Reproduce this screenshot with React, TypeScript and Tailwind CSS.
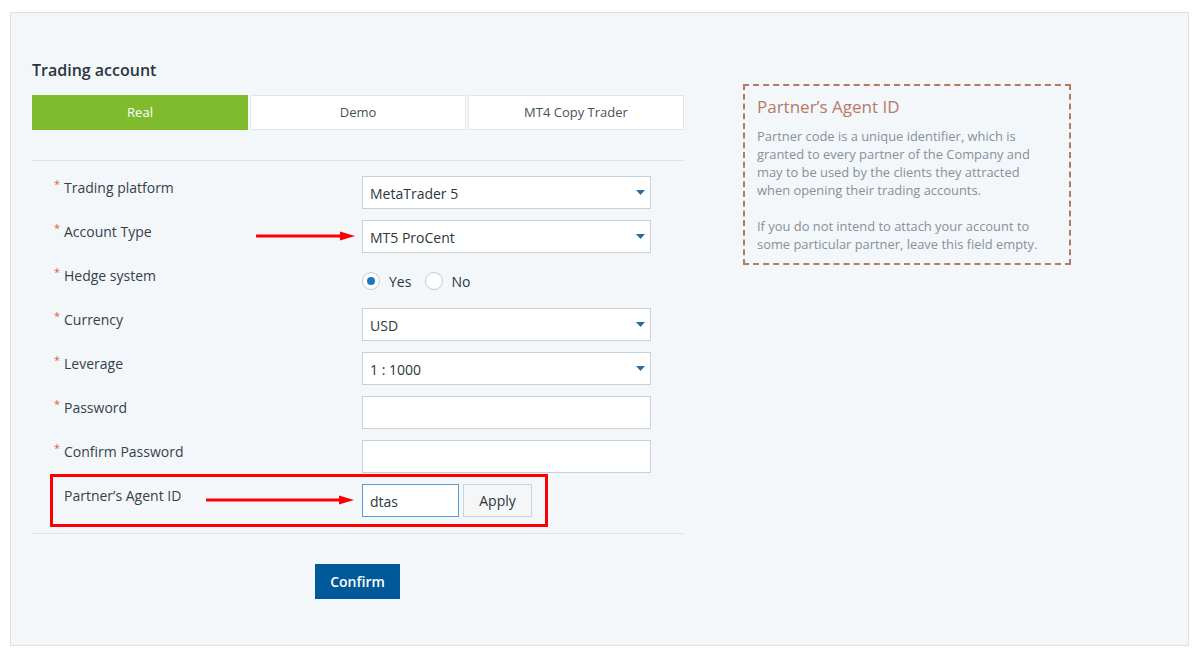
import React from "react";

const font = { fontFamily: '"Open Sans", "Noto Sans", "Liberation Sans", sans-serif' };

function Label({ text, required = true }: { text: string; required?: boolean }) {
  return (
    <div className="w-[330px] pl-[22px] h-[24px] flex items-start pt-[1px]">
      <span className="w-[10px] text-[11px] leading-[14px] text-[#e8564a]">{required ? "*" : ""}</span>
      <span className="text-[14px] leading-[22px] text-[#34414b]">{text}</span>
    </div>
  );
}

function Select({ value }: { value: string }) {
  return (
    <div className="w-[289px] h-[33px] bg-white border border-[#c9d1d8] flex items-center justify-between pl-[7px] pr-[5px]">
      <span className="text-[14px] text-[#2c3740] pt-[1px]">{value}</span>
      <svg width="9" height="5" viewBox="0 0 9 5">
        <polygon points="0,0 9,0 4.5,5" fill="#2c6c9c" />
      </svg>
    </div>
  );
}

function Input() {
  return <div className="w-[289px] h-[33px] bg-white border border-[#c9d1d8]" />;
}

function Arrow({ width }: { width: number }) {
  return (
    <svg width={width} height="12" viewBox={`0 0 ${width} 12`}>
      <line x1="1" y1="6" x2={width - 12} y2="6" stroke="#ff0000" strokeWidth="3" strokeLinecap="round" />
      <polygon points={`${width - 15},1.5 ${width},6 ${width - 15},10.5`} fill="#ff0000" />
    </svg>
  );
}

function Row({ children }: { children: React.ReactNode }) {
  return <div className="relative h-[33px] flex items-start">{children}</div>;
}

export default function App() {
  return (
    <div style={font} className="min-h-[652px] bg-white pt-[12px] px-[10px]">
      <div className="h-[634px] border border-[#d9e1e6] bg-[#f4f7fa] flex pl-[21px] pt-[45px]">
        <div className="w-[652px]">
          <h2 className="h-[24px] leading-[24px] text-[16px] font-semibold text-[#2a3640]">Trading account</h2>
          <div className="mt-[13px] grid grid-cols-3 gap-[2px] h-[35px]">
            <div className="bg-[#80bb2f] flex items-center justify-center text-[13px] text-white">Real</div>
            <div className="bg-white border border-[#e1e6ea] flex items-center justify-center text-[13px] text-[#45525c]">Demo</div>
            <div className="bg-white border border-[#e1e6ea] flex items-center justify-center text-[13px] text-[#45525c]">MT4 Copy Trader</div>
          </div>
          <div className="mt-[30px] border-t border-[#dde3e8]" />
          <div className="pt-[15px] flex flex-col gap-[11px]">
            <Row>
              <Label text="Trading platform" />
              <Select value="MetaTrader 5" />
            </Row>
            <Row>
              <Label text="Account Type" />
              <Select value="MT5 ProCent" />
              <div className="absolute left-[224px] top-[10px]">
                <Arrow width={99} />
              </div>
            </Row>
            <Row>
              <Label text="Hedge system" />
              <div className="h-[33px] flex items-center text-[14px] text-[#2c3740] pt-[1px]">
                <span className="w-[18px] h-[18px] rounded-full border border-[#c3cbd2] bg-white flex items-center justify-center">
                  <span className="w-[8px] h-[8px] rounded-full bg-[#1e76c0]" />
                </span>
                <span className="ml-[9px]">Yes</span>
                <span className="ml-[14px] w-[18px] h-[18px] rounded-full border border-[#c3cbd2] bg-white" />
                <span className="ml-[8px]">No</span>
              </div>
            </Row>
            <Row>
              <Label text="Currency" />
              <Select value="USD" />
            </Row>
            <Row>
              <Label text="Leverage" />
              <Select value="1 : 1000" />
            </Row>
            <Row>
              <Label text="Password" />
              <Input />
            </Row>
            <Row>
              <Label text="Confirm Password" />
              <Input />
            </Row>
            <Row>
              <Label text="Partner’s Agent ID" required={false} />
              <div className="flex gap-[4px]">
                <div className="w-[97px] h-[33px] bg-white border border-[#5c9bcf] flex items-center pl-[7px] pt-[1px] text-[14px] text-[#2c3740]">dtas</div>
                <div className="w-[69px] h-[33px] bg-[#f4f6f8] border border-[#cdd4da] flex items-center justify-center text-[14px] text-[#2c3740]">Apply</div>
              </div>
              <div className="absolute left-[174px] top-[10px]">
                <Arrow width={148} />
              </div>
              <div className="absolute left-[18px] top-[-10px] w-[498px] h-[53px] border-[3px] border-[#ff0000]" />
            </Row>
          </div>
          <div className="mt-[16px] border-t border-[#dde3e8]" />
          <button className="mt-[30px] ml-[283px] w-[85px] h-[35px] bg-[#005a9a] text-white text-[14px] font-semibold flex items-center justify-center">
            Confirm
          </button>
        </div>
        <div className="ml-[59px] mt-[26px]">
          <div className="w-[328px] h-[181px] border-2 border-dashed border-[#b47a68] pl-[12px] pt-[10px]">
            <div className="text-[17px] leading-[22px] text-[#b57a68]">Partner’s Agent ID</div>
            <div className="mt-[9px] text-[12.9px] leading-[18px] text-[#86909a]">
              Partner code is a unique identifier, which is<br />
              granted to every partner of the Company and<br />
              may to be used by the clients they attracted<br />
              when opening their trading accounts.
              <div className="h-[18px]" />
              If you do not intend to attach your account to<br />
              some particular partner, leave this field empty.
            </div>
          </div>
        </div>
      </div>
    </div>
  );
}
